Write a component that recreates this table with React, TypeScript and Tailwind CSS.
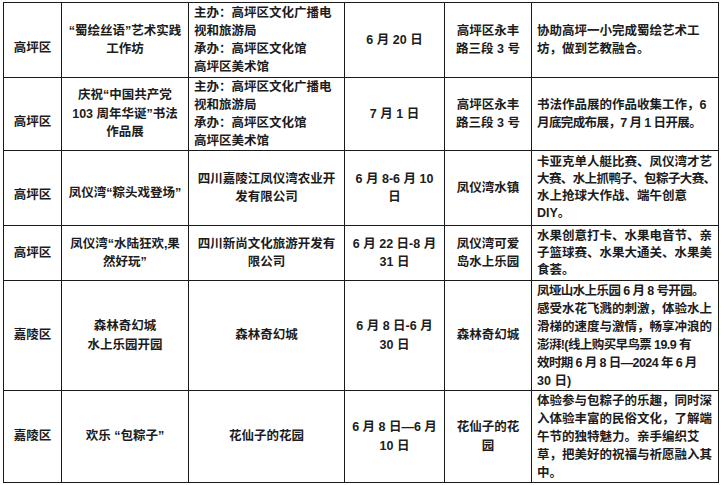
import React from "react";

// 端午活动安排表(截图局部)—— 6 列表格,行高按截图还原

type Cell = {
  lines: string[];
  align?: "center" | "left";
  pad?: string; // 额外的上内边距,用于还原截图里偏下的文字
  tight?: boolean;
};

type Row = { h: string; cells: Cell[] };

const ORG_GAOPING: Cell = {
  lines: ["主办：高坪区文化广播电", "视和旅游局", "承办：高坪区文化馆", "高坪区美术馆"],
  align: "left",
};

const rows: Row[] = [
  {
    h: "h-[75px]",
    cells: [
      { lines: ["高坪区"], pad: "pt-[16px]" },
      { lines: ["“蜀绘丝语”艺术实践", "工作坊"] },
      ORG_GAOPING,
      { lines: ["6 月 20 日"] },
      { lines: ["高坪区永丰", "路三段 3 号"] },
      { lines: ["协助高坪一小完成蜀绘艺术工", "坊，做到艺教融合。"], align: "left" },
    ],
  },
  {
    h: "h-[73px]",
    cells: [
      { lines: ["高坪区"], pad: "pt-[16px]" },
      { lines: ["庆祝“中国共产党", "103 周年华诞”书法", "作品展"] },
      ORG_GAOPING,
      { lines: ["7 月 1 日"] },
      { lines: ["高坪区永丰", "路三段 3 号"] },
      { lines: ["书法作品展的作品收集工作，6", "月底完成布展，7 月 1 日开展。"], align: "left" },
    ],
  },
  {
    h: "h-[75px]",
    cells: [
      { lines: ["高坪区"], pad: "pt-[14px]" },
      { lines: ["凤仪湾“粽头戏登场”"], pad: "pt-[11px]" },
      { lines: ["四川嘉陵江凤仪湾农业开", "发有限公司"] },
      { lines: ["6 月 8-6 月 10", "日"] },
      { lines: ["凤仪湾水镇"] },
      {
        lines: ["卡亚克单人艇比赛、凤仪湾才艺", "大赛、水上抓鸭子、包粽子大赛、", "水上抢球大作战、端午创意", "DIY。"],
        align: "left",
        tight: true,
      },
    ],
  },
  {
    h: "h-[55px]",
    cells: [
      { lines: ["高坪区"] },
      { lines: ["凤仪湾“水陆狂欢,果", "然好玩”"] },
      { lines: ["四川新尚文化旅游开发有", "限公司"] },
      { lines: ["6 月 22 日-8 月", "31 日"] },
      { lines: ["凤仪湾可爱", "岛水上乐园"] },
      {
        lines: ["水果创意打卡、水果电音节、亲", "子篮球赛、水果大通关、水果美", "食荟。"],
        align: "left",
        tight: true,
      },
    ],
  },
  {
    h: "h-[110px]",
    cells: [
      { lines: ["嘉陵区"] },
      { lines: ["森林奇幻城", "水上乐园开园"] },
      { lines: ["森林奇幻城"] },
      { lines: ["6 月 8 日-6 月", "30 日"] },
      { lines: ["森林奇幻城"] },
      {
        lines: [
          "凤垭山水上乐园 6 月 8 号开园。",
          "感受水花飞溅的刺激，体验水上",
          "滑梯的速度与激情，畅享冲浪的",
          "澎湃!(线上购买早鸟票 19.9  有",
          "效时期 6 月 8 日—2024 年 6 月",
          "30 日)",
        ],
        align: "left",
      },
    ],
  },
  {
    h: "h-[92px]",
    cells: [
      { lines: ["嘉陵区"] },
      { lines: ["欢乐 “包粽子”"] },
      { lines: ["花仙子的花园"] },
      { lines: ["6 月 8 日—6 月", "10 日"] },
      { lines: ["花仙子的花", "园"] },
      {
        lines: [
          "体验参与包粽子的乐趣，同时深",
          "入体验丰富的民俗文化，了解端",
          "午节的独特魅力。亲手编织艾",
          "草，把美好的祝福与祈愿融入其",
          "中。",
        ],
        align: "left",
      },
    ],
  },
];

const colWidths = ["w-[58px]", "w-[127px]", "w-[156px]", "w-[100px]", "w-[87px]", "w-[187px]"];

function leadingFor(c: Cell) {
  if (c.tight) return "leading-[17px]";
  if (c.lines.length >= 4) return "leading-[18px]";
  return "leading-[18.5px]";
}

export default function App() {
  return (
    <div
      className="h-[485px] w-[721px] overflow-hidden bg-white pl-[3px] pt-[2px] text-[#1c1c1c]"
      style={{ fontFamily: '"Liberation Sans", "Noto Sans CJK SC", sans-serif' }}
    >
      <table className="w-[715px] table-fixed border-collapse text-[12.5px] font-bold">
        <colgroup>
          {colWidths.map((w, i) => (
            <col key={i} className={w} />
          ))}
        </colgroup>
        <tbody>
          {rows.map((row, ri) => (
            <tr key={ri} className={row.h}>
              {row.cells.map((c, ci) => (
                <td
                  key={ci}
                  className={`border border-[#1a1a1a] p-0 align-middle whitespace-nowrap ${
                    c.align === "left" ? "pl-[5px] text-left" : "text-center"
                  } ${c.pad ?? ""} ${leadingFor(c)}`}
                >
                  {c.lines.map((l, li) => (
                    <div key={li} className={l.length >= 15 && c.align === "left" ? "tracking-[-0.6px]" : ""}>
                      {l}
                    </div>
                  ))}
                </td>
              ))}
            </tr>
          ))}
        </tbody>
      </table>
    </div>
  );
}
